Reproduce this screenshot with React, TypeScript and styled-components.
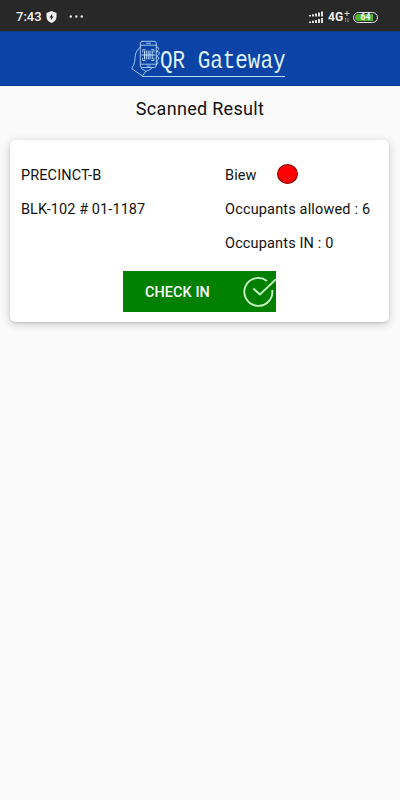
import React from 'react';
import styled, { createGlobalStyle } from 'styled-components';

const GlobalStyle = createGlobalStyle`
  * { box-sizing: border-box; }
  body { margin: 0; background: #fafafa; font-family: Roboto, sans-serif; color: #111; }
`;

const Screen = styled.main`
  width: 400px;
  height: 800px;
  overflow: hidden;
  background: #fafafa;
`;

const StatusBar = styled.div`
  height: 31px;
  padding: 3px 22px 0 16px;
  display: flex;
  align-items: center;
  background: #282828;
  color: #f2f2f2;
`;

const Clock = styled.span`
  width: 26px;
  font-size: 13px;
  line-height: 16px;
  font-weight: 500;
  white-space: nowrap;
`;

const StatusIcon = styled.svg<{ $gap: number }>`
  display: block;
  flex: none;
  margin-left: ${({ $gap }) => $gap}px;
`;

const Spacer = styled.div`
  flex: 1;
`;

const Network = styled.span`
  width: 16px;
  margin-left: 4px;
  font-size: 12px;
  line-height: 16px;
  font-weight: 700;
`;

const Battery = styled.span`
  width: 25px;
  height: 11px;
  margin-left: 3px;
  border: 1px solid #e6e6e6;
  border-radius: 6px;
  padding: 1px;
  display: flex;
`;

const BatteryLevel = styled.span`
  flex: 1;
  border-radius: 4px;
  background: linear-gradient(90deg, #4fb531 84%, #282828 84%);
  color: #fff;
  font-size: 8.5px;
  line-height: 7.5px;
  font-weight: 700;
  text-align: center;
`;

const Header = styled.header`
  height: 55px;
  display: flex;
  padding: 8px 0 0 130px;
  background: #0b44a6;
  border-top: 1px solid #123a80;
  border-bottom: 1px solid #093a94;
  color: #dff2ff;
`;

const LogoMark = styled.svg`
  display: block;
  flex: none;
  width: 30px;
  height: 40px;
`;

const Wordmark = styled.div`
  width: 125px;
  height: 37px;
  border-bottom: 1px solid #b5dcfa;
`;

const WordmarkText = styled.span`
  display: block;
  padding-top: 12px;
  font: 400 21px/22px "Liberation Mono", monospace;
  letter-spacing: -0.05px;
  white-space: nowrap;
  transform: scaleY(1.27);
  transform-origin: 0 28px;
`;

const Title = styled.h1`
  margin: 0;
  height: 54px;
  padding-top: 12px;
  font-size: 18px;
  line-height: 22px;
  font-weight: 400;
  letter-spacing: 0.3px;
  text-align: center;
`;

const Card = styled.section`
  height: 182px;
  margin: 0 11px 0 10px;
  padding-top: 18px;
  border-radius: 5px;
  background: #fff;
  box-shadow: 0 1px 2px rgba(0, 0, 0, 0.12), 0 2px 10px rgba(0, 0, 0, 0.2);
`;

const Details = styled.div`
  display: grid;
  grid-template-columns: 204px 1fr;
  grid-auto-rows: 34px;
  padding-left: 11px;
`;

const Detail = styled.div<{ $spacing?: number }>`
  display: flex;
  align-items: center;
  height: 34px;
  font-size: 14.5px;
  letter-spacing: ${({ $spacing = 0 }) => $spacing}px;
  white-space: pre;
`;

const StatusDot = styled.span`
  width: 21px;
  height: 20px;
  margin: 0 0 2px 20px;
  border: 1px solid #7c0505;
  border-radius: 50%;
  background: #f00;
`;

const CheckInButton = styled.button`
  width: 153px;
  height: 41px;
  margin: 11px 0 0 113px;
  padding: 0 0 0 22px;
  border: 0;
  display: flex;
  align-items: center;
  justify-content: space-between;
  background: #008000;
  color: #fff;
  font: 500 14.4px Roboto, sans-serif;
  letter-spacing: 0.1px;
`;

const ButtonLabel = styled.span`
  padding-top: 2px;
`;

export default function App() {
  return (
    <>
      <GlobalStyle />
      <Screen>
        <StatusBar>
          <Clock>7:43</Clock>
          <StatusIcon $gap={4} width="11" height="12" viewBox="0 0 11 12">
            <path d="M5.5 0 10.5 2V6C10.5 9 8.3 11 5.5 12 2.7 11 .5 9 .5 6V2Z" fill="#f2f2f2" />
            <path d="M6.3 2.5 3.4 6.4H5.2L4.8 9.3 7.7 5.4H5.9Z" fill="#282828" />
          </StatusIcon>
          <StatusIcon $gap={12} width="15" height="4" viewBox="0 0 15 4" fill="#e8e8e8">
            <circle cx="1.8" cy="1.5" r="1.2" />
            <circle cx="7.3" cy="1.5" r="1.2" />
            <circle cx="12.8" cy="1.5" r="1.2" />
          </StatusIcon>
          <Spacer />
          <StatusIcon $gap={0} width="16" height="13" viewBox="0 0 16 13" fill="#dedede">
            <path d="M1 4h2v1.5H1zM4 3.3h2v2.2H4zM7 2.5h2v3H7zM10 1.5h2v4h-2zM13 .6h2v4.9h-2zM1 10.5h2V12H1zM4 9.8h2V12H4zM7 9h2v3H7zM10 8h2v4h-2zM13 7.1h2V12h-2z" />
          </StatusIcon>
          <Network>4G</Network>
          <StatusIcon $gap={0} width="6" height="12" viewBox="0 0 6 12" fill="none" stroke="#ddd">
            <path d="M.5 2.5h5M3 0v5" />
            <path d="M1.7 11V7M1 8l.7-1M4 7v4M4.7 10 4 11" strokeWidth=".7" stroke="#aaa" />
          </StatusIcon>
          <Battery>
            <BatteryLevel>64</BatteryLevel>
          </Battery>
        </StatusBar>
        <Header>
          <LogoMark viewBox="0 0 30 40" fill="none" stroke="#b9dcfa" strokeWidth=".85" strokeLinejoin="round" strokeLinecap="round">
            <rect x="10.3" y="1.3" width="16" height="26.2" rx="2.2" />
            <path d="M10.5 5.2h15.8M10.5 24.2h15.8M16.5 3.2h4M17 26h3" />
            <path d="M12.7 12V9.7h2.5M21.5 9.7H24V12M24 18v2.5h-2.5M15.2 20.5h-2.5V18" />
            <path d="M14.5 11v8M16.3 11v8M18.2 11v8M20 11v8M22.2 11v8M12 15h12.8" strokeWidth="1" />
            <path d="M10.3 7C7.5 10 5.7 12 5.2 16 4.7 20 5.2 23 2.2 27.5L1.8 28.7 12.5 36l3.3-4.7c2-1.1 4.8-1 6.4-3.8" />
            <path d="M26.3 7.2c3-.8 3.5 2.4.5 4.2M26.3 12c3.7-1.7 4.6 2 .6 4.2M26.3 17.2c3.1-1.5 3.6 1.6.6 3.7M26.3 21.5c2.7-.6 2 2.6-.3 3.8M11 28c1.5 1.5 3 2 4.8 3.3M12.5 36.5H30" />
          </LogoMark>
          <Wordmark>
            <WordmarkText>QR Gateway</WordmarkText>
          </Wordmark>
        </Header>
        <Title>Scanned Result</Title>
        <Card>
          <Details>
            <Detail $spacing={0.1}>PRECINCT-B</Detail>
            <Detail $spacing={0.1}>
              Biew
              <StatusDot />
            </Detail>
            <Detail $spacing={0.08}>BLK-102 # 01-1187</Detail>
            <Detail $spacing={0.16}>Occupants allowed : 6</Detail>
            <div />
            <Detail $spacing={0.15}>Occupants IN : 0</Detail>
          </Details>
          <CheckInButton>
            <ButtonLabel>CHECK IN</ButtonLabel>
            <svg width="34" height="36" viewBox="0 0 34 36" fill="none" stroke="#c5f3c5" strokeWidth="1.9">
              <path d="M25 6.9A14 14 0 1 0 30.2 16" />
              <path d="M11.3 14.5 18 20.5 34 5.3" />
            </svg>
          </CheckInButton>
        </Card>
      </Screen>
    </>
  );
}
